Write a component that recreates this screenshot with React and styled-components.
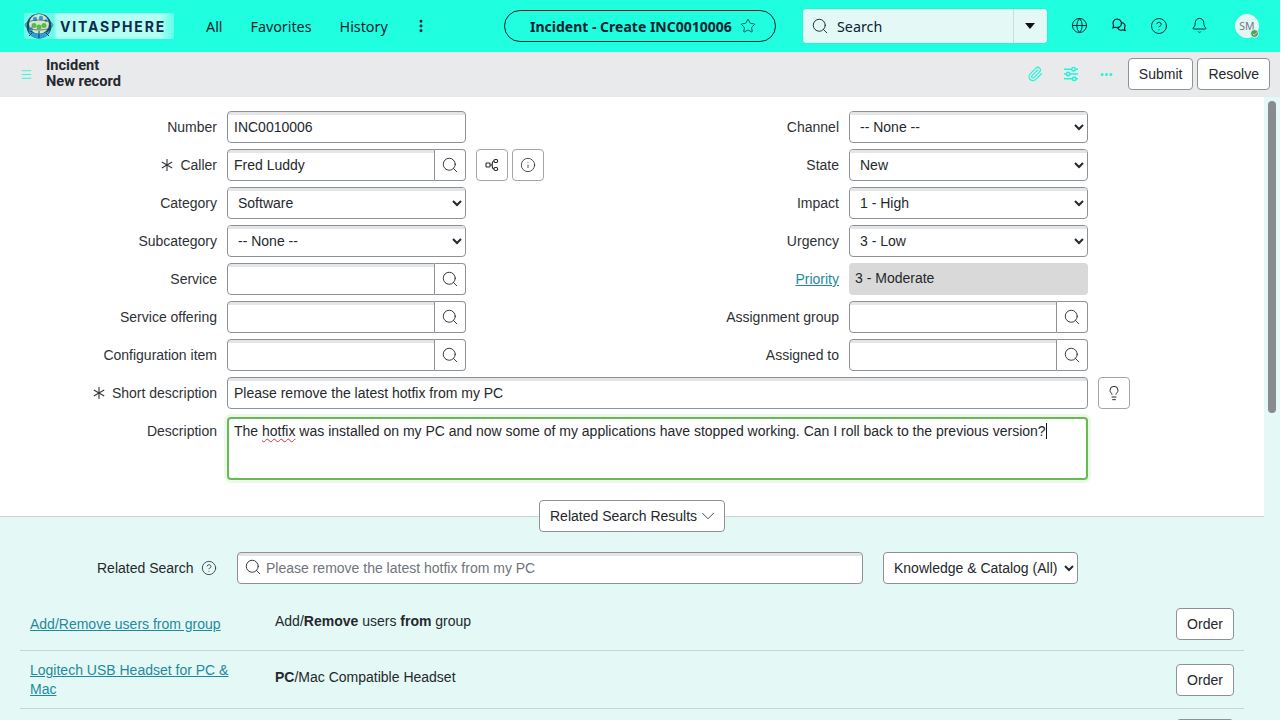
import React from "react";
import styled, { createGlobalStyle } from "styled-components";
import {
  Bell,
  Check,
  ChevronDown,
  CircleHelp,
  Ellipsis,
  EllipsisVertical,
  Globe,
  Info,
  Lightbulb,
  Menu,
  Paperclip,
  Search,
  Star,
} from "lucide-react";

const GlobalStyle = createGlobalStyle`
  html, body { margin: 0; padding: 0; background: #fff; }
  * { box-sizing: border-box; }
`;

const Page = styled.div`
  width: 1280px;
  height: 720px;
  overflow: hidden;
  display: flex;
  flex-direction: column;
  font-family: "Liberation Sans", Arial, sans-serif;
  font-size: 14px;
  color: #25282c;
`;

/* top bar */
const Header = styled.header`
  height: 52px;
  flex: none;
  display: flex;
  align-items: center;
  background: #1fffe0;
  font-family: "Noto Sans", sans-serif;
  color: #0b2230;
`;

const Logo = styled.div`
  width: 150px;
  height: 26px;
  margin-left: 24px;
  flex: none;
  display: flex;
  align-items: center;
  background: linear-gradient(90deg, #6ff8e8 0, #6ff8e8 20%, #b4fff4 22%, #b4fff4 90%, #5fffe8 100%);
`;

const LogoText = styled.span`
  margin-left: 6px;
  font-family: Inter, sans-serif;
  font-size: 14px;
  font-weight: 700;
  letter-spacing: 1.85px;
  color: #0d2b4a;
`;

const Nav = styled.nav`
  width: 298px;
  margin-left: 32px;
  flex: none;
  display: flex;
  align-items: center;
  gap: 28px;
  font-size: 14.3px;
`;

const NavDots = styled.span`
  display: flex;
  margin-left: -3px;
`;

const ContextPill = styled.div`
  width: 272px;
  height: 32px;
  flex: none;
  display: flex;
  align-items: center;
  gap: 8px;
  padding-left: 25px;
  border: 1px solid #0b2230;
  border-radius: 16px;
  font-size: 14px;
  font-weight: 700;
`;

const GlobalSearch = styled.div`
  width: 244px;
  height: 34px;
  margin-left: 27px;
  flex: none;
  display: flex;
  align-items: center;
  background: #e4f9f6;
  border-radius: 3px;
  box-shadow: 0 0 1px rgba(0, 0, 0, 0.3);
  font-size: 14.3px;
`;

const SearchText = styled.span`
  flex: 1;
  display: flex;
  align-items: center;
  gap: 8px;
  padding-left: 8px;
`;

const SearchCaret = styled.span`
  width: 34px;
  height: 100%;
  padding-right: 2px;
  border-left: 1px solid #ccdedb;
  display: flex;
  align-items: center;
  justify-content: center;

  &::after {
    content: "";
    border-left: 5px solid transparent;
    border-right: 5px solid transparent;
    border-top: 6px solid #111;
  }
`;

const HeaderIcons = styled.div`
  margin-left: 12px;
  display: flex;
`;

const HeaderIcon = styled.span`
  width: 40px;
  display: flex;
  justify-content: center;
`;

const Avatar = styled.span`
  position: relative;
  width: 24px;
  height: 24px;
  margin-left: 16px;
  flex: none;
  display: flex;
  align-items: center;
  justify-content: center;
  border-radius: 50%;
  background: #e4f6f4;
  border: 1px solid #f2fbfa;
  font-size: 10.5px;
  color: #6f7a82;
`;

const AvatarDot = styled.span`
  position: absolute;
  right: -1px;
  bottom: -1px;
  width: 9px;
  height: 9px;
  display: flex;
  align-items: center;
  justify-content: center;
  border-radius: 50%;
  background: #4f9f5c;
  border: 1px solid #e4f6f4;
  color: #e4f6f4;
`;

/* record bar */
const RecordBar = styled.div`
  height: 45px;
  flex: none;
  display: flex;
  align-items: center;
  background: #e8eaec;
  padding: 0 10px 1px 20px;
`;

const RecordTitle = styled.div`
  margin: -2px 0 0 13px;
  flex: 1;
  font-family: Roboto, sans-serif;
  font-size: 14.6px;
  font-weight: 700;
  line-height: 16px;
  color: #25282c;
`;

const BarIcon = styled.span`
  width: 36px;
  display: flex;
  justify-content: center;
  color: #1ff5d8;
`;

const Button = styled.button`
  height: 32px;
  padding: 0 10px;
  background: #fff;
  border: 1px solid #8e9298;
  border-radius: 4px;
  font-family: "Liberation Sans", Arial, sans-serif;
  font-size: 14px;
  color: #25282c;
`;

const BarButton = styled(Button)`
  margin-left: 4px;
  &:first-of-type { margin-left: 3px; }
`;

/* body */
const Body = styled.div`
  flex: 1;
  min-height: 0;
  display: flex;
`;

const Main = styled.main`
  width: 1264px;
  flex: none;
  overflow: hidden;
  display: flex;
  flex-direction: column;
`;

const ScrollTrack = styled.div`
  width: 16px;
  flex: none;
  padding: 4px;
  background: #e4f9f6;
`;

const ScrollThumb = styled.div`
  height: 312px;
  border-radius: 4px;
  background: #868c90;
`;

const Form = styled.form`
  padding: 14px 0 36px;
  display: grid;
  grid-template-columns: 622px 622px;
  row-gap: 6px;
`;

const Row = styled.div`
  grid-column: ${(p) => (p.$wide ? "1 / -1" : "auto")};
  display: grid;
  grid-template-columns: 217px ${(p) => (p.$wide ? "861px" : "239px")} auto;
  column-gap: 10px;
  align-items: ${(p) => (p.$top ? "start" : "center")};
  ${(p) => p.$top && "margin-top: 2px;"}
`;

const Label = styled.label`
  display: flex;
  align-items: center;
  justify-content: flex-end;
  gap: 7px;
  line-height: 20px;
  color: #2e3136;
  ${(p) => p.$top && "padding-top: 4px;"}
`;

const LabelLink = styled.a`
  color: #1f8a9c;
  text-decoration: underline;
`;

const TextInput = styled.input`
  width: 100%;
  height: 32px;
  padding: 0 6px;
  border: 1px solid #8e9298;
  border-radius: 4px;
  background: linear-gradient(#e4e5e7 3px, #fff 3px);
  background-clip: padding-box;
  font: 14px "Liberation Sans", Arial, sans-serif;
  color: #25282c;
  outline: none;

  &::placeholder { color: #6f757b; }
`;

const Select = styled.select`
  display: block;
  width: ${(p) => p.$width || "100%"};
  height: 32px;
  padding: 0 0 0 6px;
  border: 1px solid #8e9298;
  border-radius: 4px;
  background: #fff;
  font: 14px "Liberation Sans", Arial, sans-serif;
  color: #25282c;
`;

/* grey band along the top edge of the form's dropdowns */
const SelectBox = styled.div`
  position: relative;

  &::after {
    content: "";
    position: absolute;
    top: 1px;
    left: 1px;
    right: 1px;
    height: 3px;
    border-radius: 3px 3px 0 0;
    background: #e4e5e7;
    pointer-events: none;
  }
`;

const InputGroup = styled.div`
  display: flex;
  height: 32px;
`;

const GroupInput = styled(TextInput)`
  flex: 1;
  min-width: 0;
  border-radius: 4px 0 0 4px;
`;

const GroupButton = styled.span`
  width: 31px;
  flex: none;
  display: flex;
  align-items: center;
  justify-content: center;
  background: #fff;
  border: 1px solid #8e9298;
  border-left: 0;
  border-radius: 0 4px 4px 0;
`;

const ReadOnlyBox = styled.div`
  height: 32px;
  padding: 5px 6px;
  border-radius: 4px;
  background: #d9d9da;
  line-height: 20px;
`;

const Extras = styled.div`
  display: flex;
  gap: 4px;
`;

const IconButton = styled.span`
  width: 32px;
  height: 32px;
  display: flex;
  align-items: center;
  justify-content: center;
  border: 1px solid #a2a6ab;
  border-radius: 4px;
  background: #fff;
`;

const DescriptionBox = styled.div`
  height: 63px;
  padding: 2px 5px;
  border: 2px solid #66bb55;
  border-radius: 4px;
  background: #fff;
  box-shadow: 0 0 0 3px #edf8ea;
  line-height: 20px;
`;

const Misspelled = styled.span`
  text-decoration: underline wavy #e03030 1px;
  text-underline-offset: 2px;
`;

const Caret = styled.span`
  display: inline-block;
  width: 1px;
  height: 16px;
  vertical-align: -3px;
  background: #111;
`;

/* related search */
const Related = styled.section`
  flex: 1;
  background: #e4f9f6;
  border-top: 1px solid #cfd6d6;
`;

const ToggleWrap = styled.div`
  display: flex;
  justify-content: center;
  margin-top: -17px;
`;

const ToggleButton = styled(Button)`
  width: 186px;
  padding: 0 0 0 10px;
  display: flex;
  align-items: center;
  white-space: nowrap;
`;

const SearchRow = styled.div`
  display: flex;
  align-items: center;
  margin-top: 20px;
  padding-left: 97px;
`;

const SearchLabel = styled.span`
  width: 140px;
  flex: none;
  display: flex;
  align-items: center;
  gap: 7px;
`;

const RelatedInput = styled.div`
  position: relative;
  width: 626px;
  margin-right: 20px;
  flex: none;
`;

const InputIcon = styled.span`
  position: absolute;
  left: 7px;
  top: 6px;
  display: flex;
`;

const RelatedField = styled(TextInput)`
  padding-left: 28px;
`;

const Results = styled.div`
  margin: 14px 20px 0;
`;

const ResultRow = styled.div`
  display: grid;
  grid-template-columns: 245px 1fr auto;
  align-items: center;
  padding: 10px;
  border-bottom: 1px solid #cdd3d5;
`;

const ResultLink = styled.a`
  padding-right: 20px;
  line-height: 18.5px;
  color: #1f8a9c;
  text-decoration: underline;
`;

const ResultText = styled.div`
  margin-bottom: 6px;
  line-height: 20px;
`;

const OrderButton = styled(Button)`
  width: 58px;
`;

const Required = () => (
  <svg width="12" height="12" viewBox="0 0 12 12" stroke="#33373c" strokeWidth="1.1" fill="none">
    <path d="M6 0v12M.8 3l10.4 6M.8 9l10.4-6" />
  </svg>
);

const ChatIcon = () => (
  <svg width="16" height="16" viewBox="0 0 16 16" fill="none" stroke="#0b2230" strokeWidth="1.2">
    <path d="M6.2 2a4.3 4.3 0 0 0-3.7 6.5L2 10.8l2.3-.6A4.3 4.3 0 1 0 6.2 2z" />
    <path d="M10.7 5.6a3.6 3.6 0 0 1 2.8 5.6l.5 2.2-2.2-.6a3.6 3.6 0 0 1-5-1.7" />
  </svg>
);

const SlidersIcon = () => (
  <svg width="16" height="16" viewBox="0 0 16 16" fill="none" stroke="currentColor" strokeWidth="1.4">
    <path d="M1 3.2h7.5M12.5 3.2H15M1 8h2.5M7 8h8M1 12.8h8.5M13 12.8h2" />
    <circle cx="10.5" cy="3.2" r="1.8" />
    <circle cx="5.2" cy="8" r="1.8" />
    <circle cx="11.2" cy="12.8" r="1.8" />
  </svg>
);

const ReferenceIcon = () => (
  <svg width="14" height="14" viewBox="0 0 14 14" fill="none" stroke="#25282c" strokeWidth="1.1">
    <rect x="1" y="5" width="4" height="4" rx="0.8" />
    <rect x="9" y="1.5" width="3.6" height="3" rx="1.2" />
    <rect x="9" y="9.5" width="3.6" height="3" rx="1.2" />
    <path d="M5 7h2M7.2 7c0-2 .4-4 1.8-4M7.2 7c0 2 .4 4 1.8 4" />
  </svg>
);

const GlobeLogo = () => (
  <svg width="30" height="26" viewBox="0 0 30 26">
    <circle cx="15" cy="13" r="12.5" fill="#14466e" />
    <circle cx="15" cy="11" r="10" fill="#cfe9c8" />
    <path d="M4 17c6 5 16 5 22 0l-3 6c-5 3-11 3-16 0z" fill="#2b9fd8" />
    <g fill="#57b947">
      <circle cx="10" cy="12.5" r="2.5" />
      <circle cx="15" cy="14" r="2.5" />
      <circle cx="20" cy="12.5" r="2.5" />
    </g>
    <g fill="#3c9bd6">
      <circle cx="11" cy="6" r="2.2" />
      <circle cx="17" cy="5" r="2.2" />
      <circle cx="22" cy="7.5" r="1.6" />
      <circle cx="7" cy="16" r="2" />
    </g>
    <path d="M15 18v7M8 20l-3 3M22 20l3 3" stroke="#0e3a5c" strokeWidth="1" />
    <ellipse cx="15" cy="12" rx="14" ry="5" fill="none" stroke="#33505f" strokeWidth="0.7" />
  </svg>
);

const lookup = <Search size={18} strokeWidth={1.2} color="#25282c" />;

const SearchField = ({ value = "" }) => (
  <InputGroup>
    <GroupInput defaultValue={value} />
    <GroupButton>{lookup}</GroupButton>
  </InputGroup>
);

const Dropdown = ({ value }) => (
  <SelectBox>
    <Select defaultValue={value}>
      <option>{value}</option>
    </Select>
  </SelectBox>
);

const results = [
  { link: "Add/Remove users from group", text: <>Add/<b>Remove</b> users <b>from</b> group</>, order: "Order" },
  { link: "Logitech USB Headset for PC & Mac", text: <><b>PC</b>/Mac Compatible Headset</>, order: "Order" },
  { link: "", text: "", order: "" },
];

export default function App() {
  return (
    <Page>
      <GlobalStyle />
      <Header>
        <Logo>
          <GlobeLogo />
          <LogoText>VITASPHERE</LogoText>
        </Logo>
        <Nav>
          <span>All</span>
          <span>Favorites</span>
          <span>History</span>
          <NavDots>
            <EllipsisVertical size={16} strokeWidth={2.4} />
          </NavDots>
        </Nav>
        <ContextPill>
          Incident - Create INC0010006
          <Star size={16} strokeWidth={1.1} />
        </ContextPill>
        <GlobalSearch>
          <SearchText>
            <Search size={18} strokeWidth={1.2} />
            Search
          </SearchText>
          <SearchCaret />
        </GlobalSearch>
        <HeaderIcons>
          <HeaderIcon><Globe size={17} strokeWidth={1.3} /></HeaderIcon>
          <HeaderIcon><ChatIcon /></HeaderIcon>
          <HeaderIcon><CircleHelp size={18} strokeWidth={1.2} /></HeaderIcon>
          <HeaderIcon><Bell size={17} strokeWidth={1.3} /></HeaderIcon>
        </HeaderIcons>
        <Avatar>
          SM
          <AvatarDot><Check size={6} strokeWidth={3} /></AvatarDot>
        </Avatar>
      </Header>

      <RecordBar>
        <Menu size={13} color="#1ff5d8" strokeWidth={1.6} />
        <RecordTitle>
          Incident
          <br />
          New record
        </RecordTitle>
        <BarIcon><Paperclip size={16} strokeWidth={1.7} /></BarIcon>
        <BarIcon><SlidersIcon /></BarIcon>
        <BarIcon><Ellipsis size={15} strokeWidth={2.8} /></BarIcon>
        <BarButton type="button">Submit</BarButton>
        <BarButton type="button">Resolve</BarButton>
      </RecordBar>

      <Body>
        <Main>
          <Form>
            <Row>
              <Label>Number</Label>
              <TextInput defaultValue="INC0010006" />
            </Row>
            <Row>
              <Label>Channel</Label>
              <Dropdown value="-- None --" />
            </Row>
            <Row>
              <Label><Required />Caller</Label>
              <SearchField value="Fred Luddy" />
              <Extras>
                <IconButton><ReferenceIcon /></IconButton>
                <IconButton><Info size={16} strokeWidth={1.2} /></IconButton>
              </Extras>
            </Row>
            <Row>
              <Label>State</Label>
              <Dropdown value="New" />
            </Row>
            <Row>
              <Label>Category</Label>
              <Dropdown value="Software" />
            </Row>
            <Row>
              <Label>Impact</Label>
              <Dropdown value="1 - High" />
            </Row>
            <Row>
              <Label>Subcategory</Label>
              <Dropdown value="-- None --" />
            </Row>
            <Row>
              <Label>Urgency</Label>
              <Dropdown value="3 - Low" />
            </Row>
            <Row>
              <Label>Service</Label>
              <SearchField />
            </Row>
            <Row>
              <Label><LabelLink>Priority</LabelLink></Label>
              <ReadOnlyBox>3 - Moderate</ReadOnlyBox>
            </Row>
            <Row>
              <Label>Service offering</Label>
              <SearchField />
            </Row>
            <Row>
              <Label>Assignment group</Label>
              <SearchField />
            </Row>
            <Row>
              <Label>Configuration item</Label>
              <SearchField />
            </Row>
            <Row>
              <Label>Assigned to</Label>
              <SearchField />
            </Row>
            <Row $wide>
              <Label><Required />Short description</Label>
              <TextInput defaultValue="Please remove the latest hotfix from my PC" />
              <IconButton><Lightbulb size={16} strokeWidth={1.5} /></IconButton>
            </Row>
            <Row $wide $top>
              <Label $top>Description</Label>
              <DescriptionBox>
                The <Misspelled>hotfix</Misspelled> was installed on my PC and now some of my applications have stopped working. Can I roll back to the previous version?<Caret />
              </DescriptionBox>
            </Row>
          </Form>

          <Related>
            <ToggleWrap>
              <ToggleButton type="button">
                Related Search Results
                <ChevronDown size={22} strokeWidth={0.9} />
              </ToggleButton>
            </ToggleWrap>
            <SearchRow>
              <SearchLabel>
                Related Search
                <CircleHelp size={16} strokeWidth={1.2} />
              </SearchLabel>
              <RelatedInput>
                <InputIcon>{lookup}</InputIcon>
                <RelatedField placeholder="Please remove the latest hotfix from my PC" />
              </RelatedInput>
              <Select $width="195px" defaultValue="Knowledge & Catalog (All)">
                <option>Knowledge &amp; Catalog (All)</option>
              </Select>
            </SearchRow>
            <Results>
              {results.map((r, i) => (
                <ResultRow key={i}>
                  <ResultLink>{r.link}</ResultLink>
                  <ResultText>{r.text}</ResultText>
                  <OrderButton type="button">{r.order}</OrderButton>
                </ResultRow>
              ))}
            </Results>
          </Related>
        </Main>
        <ScrollTrack>
          <ScrollThumb />
        </ScrollTrack>
      </Body>
    </Page>
  );
}
